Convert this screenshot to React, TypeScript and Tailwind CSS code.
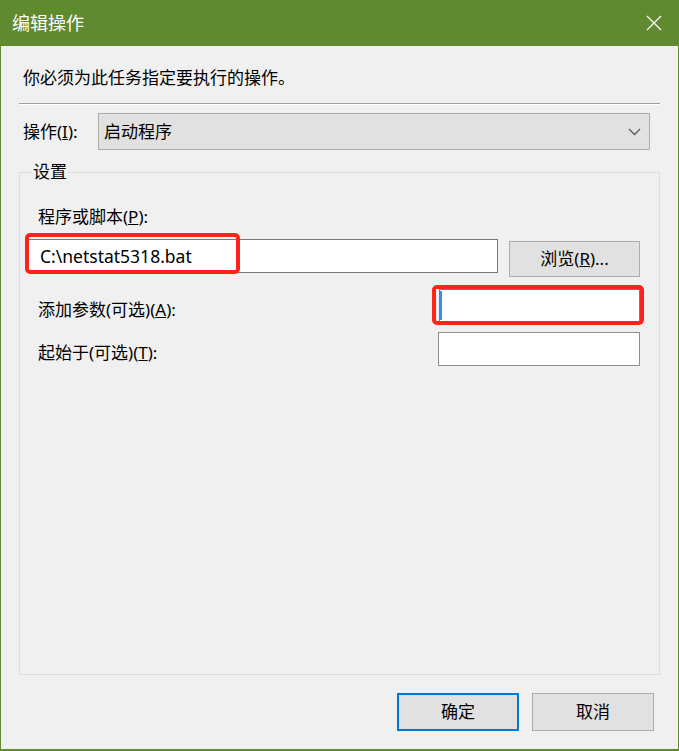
import { FC } from "react";

const font = { fontFamily: '"Noto Sans", "Noto Sans CJK SC", sans-serif' };

const App: FC = () => {
  return (
    <div
      className="flex h-[751px] w-[679px] flex-col border-x border-b-2 border-[#5f8a2f] bg-[#f0f0f0] text-[17px] leading-[24px] text-black"
      style={font}
    >
      {/* title bar */}
      <div className="flex h-[46px] shrink-0 items-center justify-between bg-[#5f8a2f] pl-[11px] pr-[16px] text-white">
        <span className="text-[18px] leading-[24px]">编辑操作</span>
        <svg width="16" height="16" viewBox="0 0 16 16" stroke="#ffffff" strokeWidth={1.2} fill="none">
          <path d="M1 1L15 15M15 1L1 15" />
        </svg>
      </div>

      <div className="flex grow flex-col px-[18px]">
        <p className="mt-[20px] pl-[4px]">你必须为此任务指定要执行的操作。</p>
        <div className="mt-[13px] h-[2px] border-t border-[#a0a0a0] bg-white" />

        {/* action */}
        <div className="mt-[8px] mr-[10px] flex items-center">
          <span className="w-[79px] pl-[4px]">
            操作(<span className="underline">I</span>):
          </span>
          <div className="flex h-[37px] grow items-center justify-between border border-[#adadad] bg-[#e1e1e1] pl-[5px] pr-[8px]">
            <span>启动程序</span>
            <svg width="13" height="8" viewBox="0 0 13 8" fill="none" stroke="#5a5a5a" strokeWidth={1.3}>
              <path d="M1 1L6.5 6.5L12 1" />
            </svg>
          </div>
        </div>

        {/* settings group */}
        <div className="relative mt-[22px] h-[503px] border border-[#dcdcdc] pl-[7px] pr-[19px] pt-[32px]">
          <span className="absolute left-[12px] top-[-13px] bg-[#f0f0f0] px-[1px]">设置</span>

          <p className="pl-[11px]">
            程序或脚本(<span className="underline">P</span>):
          </p>
          <div className="mt-[10px] flex items-start justify-between">
            <div className="relative flex h-[34px] w-[471px] items-center border border-[#7a7a7a] bg-white pl-[12px] text-[17.5px]">
              C:\netstat5318.bat
              <div className="absolute left-[-3px] top-[-7px] h-[41px] w-[215px] rounded-[5px] border-[4px] border-[#ff2318]" />
            </div>
            <div className="mt-[2px] flex h-[36px] w-[131px] items-center justify-center border border-[#adadad] bg-[#e1e1e1]">
              浏览(<span className="underline">R</span>)...
            </div>
          </div>

          <div className="mt-[12px] flex items-start justify-between">
            <span className="mt-[9px] pl-[11px]">
              添加参数(可选)(<span className="underline">A</span>):
            </span>
            <div className="relative h-[33px] w-[201px] border border-[#7a7a7a] bg-white">
              <div className="absolute left-[0px] top-[1px] h-[29px] w-[2px] bg-[#3b8ee6]" />
              <div className="absolute left-[-8px] top-[-5px] h-[40px] w-[212px] rounded-[5px] border-[4px] border-[#ff2318]" />
            </div>
          </div>

          <div className="mt-[10px] flex items-start justify-between">
            <span className="mt-[9px] pl-[11px]">
              起始于(可选)(<span className="underline">T</span>):
            </span>
            <div className="h-[34px] w-[202px] border border-[#8f8f8f] bg-white" />
          </div>
        </div>

        {/* buttons */}
        <div className="mt-[18px] flex justify-end gap-[13px] pr-[6px]">
          <div className="flex h-[38px] w-[122px] items-center justify-center border-2 border-[#0078d7] bg-[#e1e1e1]">
            确定
          </div>
          <div className="flex h-[38px] w-[122px] items-center justify-center border border-[#adadad] bg-[#e1e1e1]">
            取消
          </div>
        </div>
      </div>
    </div>
  );
};

export default App;
